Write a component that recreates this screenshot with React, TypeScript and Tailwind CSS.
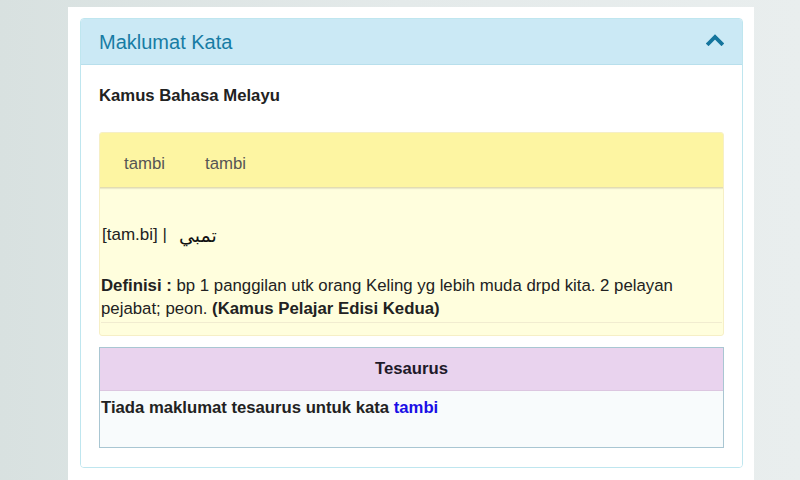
import React from "react";

export default function App() {
  return (
    <div
      className="w-[800px] h-[480px] overflow-hidden bg-gradient-to-r from-[#d8e1e0] via-[#e4eaea] to-[#e9eeee] flex"
      style={{ fontFamily: '"Liberation Sans", Arial, sans-serif' }}
    >
      <div className="ml-[68px] mt-[7px] w-[686px] h-[473px] bg-white pl-[12px] pr-[11px] pt-[11px]">
        <div className="w-[663px] border border-[#bfe6ef] rounded-[4px] overflow-hidden">
          <div className="h-[46px] bg-[#cbe9f5] border-b border-[#b8dfec] flex items-center justify-between pl-[18px] pr-[18px]">
            <span className="text-[20px] text-[#177ca4] leading-none">Maklumat Kata</span>
            <svg width="18" height="12" viewBox="0 0 18 12" className="mt-[-4px]">
              <path d="M2.5 9.5 L9 3 L15.5 9.5" fill="none" stroke="#15759d" strokeWidth="3.8" strokeLinecap="square" />
            </svg>
          </div>
          <div className="px-[18px] pt-[21px] pb-[19px] bg-white">
            <div className="text-[16.7px] font-bold text-[#222] leading-[20px]">Kamus Bahasa Melayu</div>
            <div className="mt-[26px] border border-[#f6efc6] rounded-[3px] overflow-hidden bg-[#fffedd]">
              <div className="h-[55px] pt-[8px] bg-[#fdf5a2] border-b border-[#e3dcb2] shadow-[0_1px_1px_rgba(0,0,0,0.08)] flex items-center pl-[24px] gap-[40px] text-[16.8px] text-[#555]">
                <span>tambi</span>
                <span>tambi</span>
              </div>
              <div className="pt-[35px] px-[1px]">
                <div className="flex items-center h-[24px] text-[17px] text-[#222]">
                  <span className="ml-[1px]">[tam.bi] |</span>
                  <span
                    className="ml-[12px] text-[19px] text-[#111]"
                    dir="rtl"
                    style={{ fontFamily: '"DejaVu Sans", "Noto Sans", sans-serif' }}
                  >
                    تمبي
                  </span>
                </div>
                <p className="mt-[27px] text-[16.8px] leading-[23px] text-[#222] pr-[10px]">
                  <b>Definisi :</b> bp 1 panggilan utk orang Keling yg lebih muda drpd kita. 2 pelayan pejabat; peon.{" "}
                  <b>(Kamus Pelajar Edisi Kedua)</b>
                </p>
                <div className="mt-[2px] border-t border-[#f1ecd0] h-[13px]"></div>
              </div>
            </div>
            <div className="mt-[11px] border border-[#a9c6d2] h-[101px] bg-[#f8fbfc] flex flex-col">
              <div className="h-[43px] bg-[#e9d3ee] border-b border-[#dcc6e0] flex items-center justify-center text-[16.7px] font-bold text-[#1f1a2a]">
                Tesaurus
              </div>
              <div className="pt-[7px] pl-[1px] text-[16.7px] font-bold text-[#222] leading-[20px]">
                Tiada maklumat tesaurus untuk kata <span className="text-[#1a0ee6]">tambi</span>
              </div>
            </div>
          </div>
        </div>
      </div>
    </div>
  );
}
